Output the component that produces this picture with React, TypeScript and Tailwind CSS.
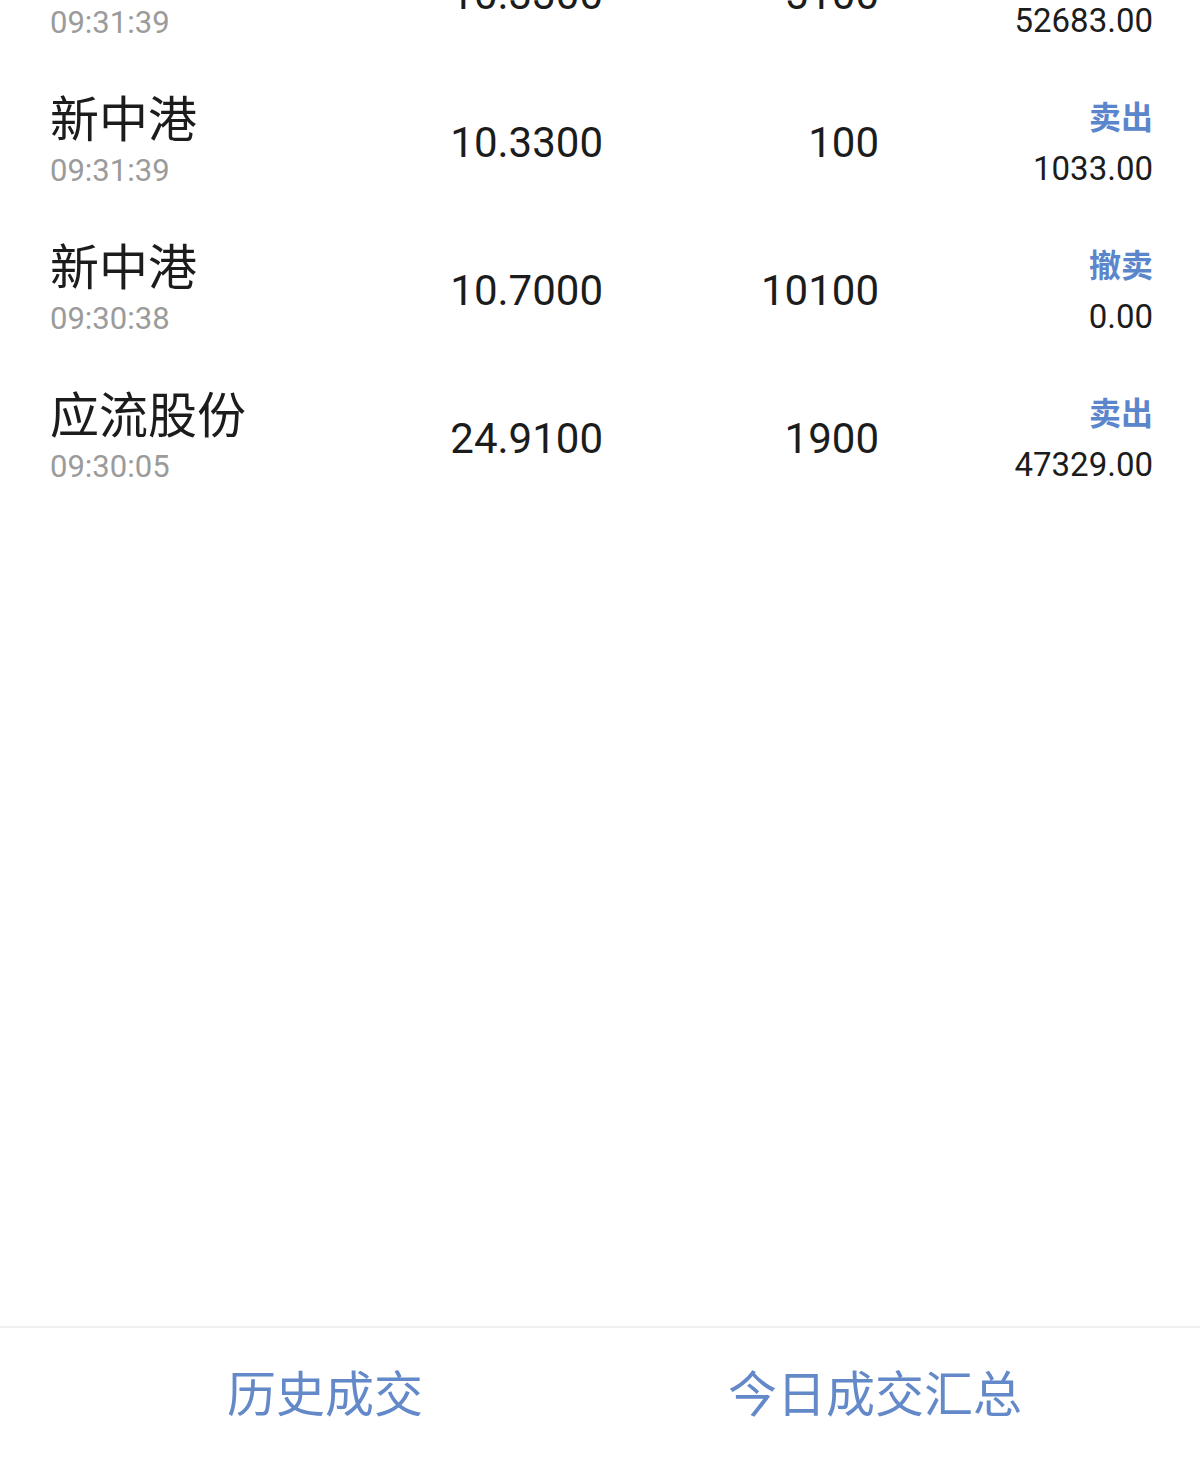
const trades = [
  { name: '新中港', time: '09:31:39', price: '10.3300', qty: '5100', action: '卖出', amount: '52683.00' },
  { name: '新中港', time: '09:31:39', price: '10.3300', qty: '100', action: '卖出', amount: '1033.00' },
  { name: '新中港', time: '09:30:38', price: '10.7000', qty: '10100', action: '撤卖', amount: '0.00' },
  { name: '应流股份', time: '09:30:05', price: '24.9100', qty: '1900', action: '卖出', amount: '47329.00' },
]

export default function App() {
  return (
    <div
      className="flex h-screen w-full flex-col bg-white text-[#1c1c1c]"
      style={{ fontFamily: 'Roboto, "Noto Sans CJK SC", sans-serif' }}
    >
      {/* Trade list (scrolled, first row partly hidden) */}
      <div className="flex-1 overflow-hidden">
        <div className="-mt-[79px]">
          {trades.map((t, i) => (
            <div key={i} className="flex h-[148px] items-center pl-[50px] pr-[47px]">
              <div className="flex w-[320px] flex-col">
                <span className="text-[49px] leading-[56px]">{t.name}</span>
                <span className="text-[31px] leading-[44px] text-[#9b9b9b]">{t.time}</span>
              </div>
              <div className="w-[233px] text-right text-[42px] leading-none">{t.price}</div>
              <div className="w-[276px] text-right text-[42px] leading-none">{t.qty}</div>
              <div className="flex flex-1 flex-col items-end">
                <span className="text-[32px] font-bold leading-[52px] text-[#5b86cc]">{t.action}</span>
                <span className="text-[33px] leading-[50px]">{t.amount}</span>
              </div>
            </div>
          ))}
        </div>
      </div>

      {/* Bottom bar */}
      <div className="grid h-[146px] grid-cols-2 border-t-2 border-[#f0f0f0] px-[50px] pb-[8px] text-[49px] text-[#6489c9]">
        <div className="flex items-center justify-center">历史成交</div>
        <div className="flex items-center justify-center">今日成交汇总</div>
      </div>
    </div>
  )
}
